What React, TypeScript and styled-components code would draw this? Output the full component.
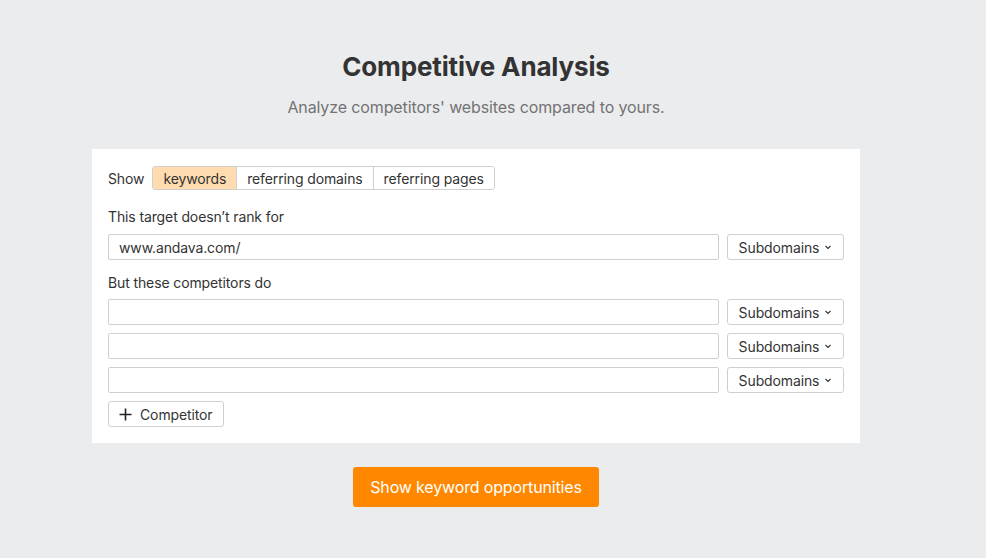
import * as React from 'react';
import styled, { createGlobalStyle } from 'styled-components';

const GlobalStyle = createGlobalStyle`
  html, body {
    margin: 0;
    padding: 0;
    background: #ebecee;
    font-family: Inter, "Noto Sans", "Liberation Sans", sans-serif;
    color: #333;
    letter-spacing: -0.12px;
  }
`;

const Page = styled.div`
  width: 768px;
  margin-left: 92px;
  padding-top: 50px;
  display: flex;
  flex-direction: column;
  align-items: center;
`;

const Title = styled.h1`
  margin: 0;
  font-size: 26px;
  line-height: 34px;
  font-weight: 700;
  letter-spacing: -0.15px;
  color: #333;
`;

const Subtitle = styled.p`
  margin: 13px 0 0;
  font-size: 16px;
  line-height: 20px;
  color: #737373;
`;

const Card = styled.div`
  align-self: stretch;
  margin-top: 32px;
  background: #fff;
  padding: 17px 16px 16px;
  display: flex;
  flex-direction: column;
`;

const ShowRow = styled.div`
  display: flex;
  align-items: center;
  gap: 8px;
  font-size: 14px;
`;

const Tabs = styled.div`
  display: flex;
  border: 1px solid #d0d0d0;
  border-radius: 3px;
  overflow: hidden;
`;

const Tab = styled.button<{ $active?: boolean }>`
  font-family: inherit;
  letter-spacing: inherit;
  font-size: 14px;
  color: #333;
  height: 22px;
  padding: 0 10px;
  border: none;
  border-left: 1px solid ${p => (p.$active ? '#f3c38b' : '#d0d0d0')};
  background: ${p => (p.$active ? '#ffdcb0' : '#fff')};
  cursor: pointer;
  &:first-child {
    border-left: none;
  }
`;

const Label = styled.div<{ $first?: boolean }>`
  font-size: 14px;
  line-height: 18px;
  margin-top: ${p => (p.$first ? '18px' : '14px')};
  margin-bottom: ${p => (p.$first ? '8px' : '7px')};
`;

const Rows = styled.div`
  display: flex;
  flex-direction: column;
  gap: 8px;
`;

const Row = styled.div`
  display: flex;
  gap: 8px;
`;

const Input = styled.input`
  flex: 1;
  height: 26px;
  box-sizing: border-box;
  border: 1px solid #cfcfcf;
  border-radius: 2px;
  padding: 0 10px;
  font-family: inherit;
  letter-spacing: inherit;
  font-size: 14px;
  color: #333;
  outline: none;
`;

const SelectButton = styled.button`
  width: 117px;
  height: 26px;
  box-sizing: border-box;
  border: 1px solid #cfcfcf;
  border-radius: 3px;
  background: #fff;
  font-family: inherit;
  letter-spacing: inherit;
  font-size: 14px;
  color: #333;
  display: flex;
  align-items: center;
  justify-content: center;
  gap: 5px;
  cursor: pointer;
`;

const AddButton = styled.button`
  align-self: flex-start;
  margin-top: 8px;
  height: 26px;
  box-sizing: border-box;
  border: 1px solid #cfcfcf;
  border-radius: 3px;
  background: #fff;
  font-family: inherit;
  letter-spacing: inherit;
  font-size: 14px;
  color: #333;
  padding: 0 10px;
  display: flex;
  align-items: center;
  gap: 8px;
  cursor: pointer;
`;

const Submit = styled.button`
  margin-top: 24px;
  height: 40px;
  padding: 0 17px;
  border: none;
  border-radius: 3px;
  background: #ff8800;
  color: #fff;
  font-family: inherit;
  letter-spacing: -0.15px;
  font-size: 16px;
  cursor: pointer;
`;

const Chevron = () => (
  <svg width="8" height="8" viewBox="0 0 8 8" fill="none">
    <path d="M1.5 3L4 5.5L6.5 3" stroke="#333" strokeWidth="1.1" />
  </svg>
);

const Plus = () => (
  <svg width="13" height="13" viewBox="0 0 13 13" fill="none">
    <path d="M6.5 0.5V12.5M0.5 6.5H12.5" stroke="#222" strokeWidth="1.6" />
  </svg>
);

const Subdomains = () => (
  <SelectButton>
    Subdomains <Chevron />
  </SelectButton>
);

export default function App() {
  const [tab, setTab] = React.useState('keywords');
  const [target, setTarget] = React.useState('www.andava.com/');
  const [competitors, setCompetitors] = React.useState(['', '', '']);

  return (
    <>
      <GlobalStyle />
      <Page>
        <Title>Competitive Analysis</Title>
        <Subtitle>Analyze competitors' websites compared to yours.</Subtitle>
        <Card>
          <ShowRow>
            Show
            <Tabs>
              {['keywords', 'referring domains', 'referring pages'].map(t => (
                <Tab key={t} $active={tab === t} onClick={() => setTab(t)}>
                  {t}
                </Tab>
              ))}
            </Tabs>
          </ShowRow>
          <Label $first>This target doesn’t rank for</Label>
          <Row>
            <Input value={target} onChange={e => setTarget(e.target.value)} />
            <Subdomains />
          </Row>
          <Label>But these competitors do</Label>
          <Rows>
            {competitors.map((c, i) => (
              <Row key={i}>
                <Input
                  value={c}
                  onChange={e => {
                    const next = [...competitors];
                    next[i] = e.target.value;
                    setCompetitors(next);
                  }}
                />
                <Subdomains />
              </Row>
            ))}
          </Rows>
          <AddButton onClick={() => setCompetitors([...competitors, ''])}>
            <Plus /> Competitor
          </AddButton>
        </Card>
        <Submit>Show keyword opportunities</Submit>
      </Page>
    </>
  );
}
